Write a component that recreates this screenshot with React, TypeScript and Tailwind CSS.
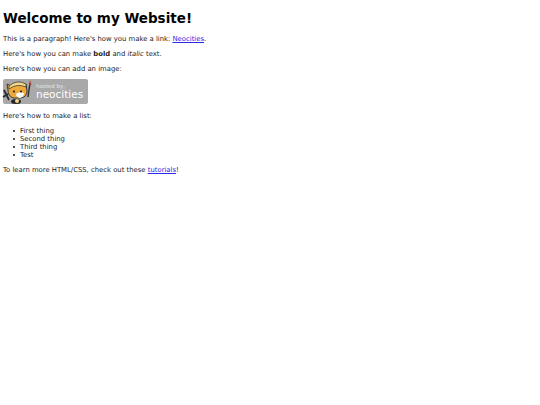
export default function App() {
  const items = ["First thing", "Second thing", "Third thing", "Test"];
  return (
    <div className="min-h-[405px] bg-white">
      <div className="opacity-[0.99] px-[3px] pt-[10px] text-[#1a1a1a] text-[6.85px] leading-[8px] font-['DejaVu_Sans',sans-serif]">
        <h1 className="text-[13.5px] leading-[16px] font-bold text-black">Welcome to my Website!</h1>
        <p className="mt-[9px]">
          This is a paragraph! Here's how you make a link: <a className="text-[#2a2ae8] underline" href="#">Neocities</a>.
        </p>
        <p className="mt-[7px]">
          Here's how you can make <b>bold</b> and <i>italic</i> text.
        </p>
        <p className="mt-[7px]">Here's how you can add an image:</p>
        <div className="mt-[6px] relative flex h-[25px] w-[85px] flex-col items-start rounded-[2px] bg-[#a8a8a8] pl-[33px] text-white">
          <svg className="absolute -left-px top-0" width="33" height="26" viewBox="0 0 33 26">
            <path d="M5 5 L9 7 Q15 3 21 6 L24 5 L25 12 Q25 18 19 19 L11 19 Q6 17 6 11 Z" fill="#eda93a" stroke="#2a2a2a" strokeWidth="0.9" />
            <path d="M7 7 Q15 0 24 5 L24 8 Q15 4 7 10 Z" fill="#f3d98a" stroke="#2a2a2a" strokeWidth="0.7" />
            <path d="M14 15 Q17 12 22 14 Q22 18 18 19 Q14 18 14 15 Z" fill="#fff" />
            <circle cx="12" cy="12.5" r="1" fill="#111" />
            <circle cx="19" cy="12.5" r="1" fill="#111" />
            <path d="M2 11 L7 21 M1 18 L6 15" stroke="#2a2a2a" strokeWidth="1.8" fill="none" />
            <path d="M28 4 L26 18" stroke="#2a2a2a" strokeWidth="1.4" />
            <path d="M28 1 L29.5 6 L27 6 Z" fill="#b03a2e" />
            <ellipse cx="14" cy="22.5" rx="5" ry="2.5" fill="#222" />
            <circle cx="15" cy="22" r="2" fill="#f3d98a" />
          </svg>
          <span className="mt-[4px] text-[5.5px] leading-[6px] text-[#e6e6e6]">hosted by,</span>
          <span className="text-[10.5px] leading-[11px]">neocities</span>
        </div>
        <p className="mt-[8px]">Here's how to make a list:</p>
        <ul className="mt-[7px] pl-[17px]">
          {items.map((item) => (
            <li key={item} className="relative before:absolute before:-left-[7px] before:top-[3px] before:size-[2px] before:rounded-full before:bg-[#1a1a1a] before:content-['']">
              {item}
            </li>
          ))}
        </ul>
        <p className="mt-[7px]">
          To learn more HTML/CSS, check out these <a className="text-[#2a2ae8] underline" href="#">tutorials</a>!
        </p>
      </div>
    </div>
  );
}
